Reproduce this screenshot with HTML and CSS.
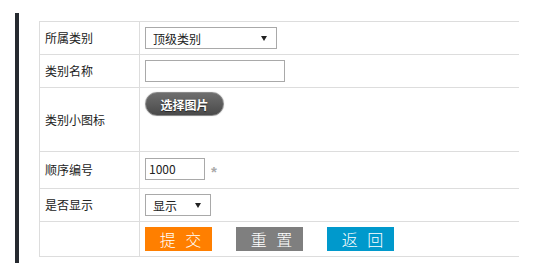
FILE: index.html
```html
<!DOCTYPE html>
<html lang="zh-CN">
  <head>
    <meta charset="UTF-8" />
    <meta name="viewport" content="width=device-width, initial-scale=1.0" />
    <title>添加类别</title>
    <link rel="stylesheet" href="styles.css">
  </head>
  <body>
    <div class="main">
      <form class="form-table">
        <div class="label">所属类别</div>
        <div class="value">
          <span class="select-wrap">
            <select class="select-parent" name="parent">
              <option>顶级类别</option>
            </select>
          </span>
        </div>

        <div class="label">类别名称</div>
        <div class="value">
          <input type="text" class="input-name" name="name" />
        </div>

        <div class="label">类别小图标</div>
        <div class="value value-top">
          <button type="button" class="btn-pic">选择图片</button>
        </div>

        <div class="label">顺序编号</div>
        <div class="value value-order">
          <input type="text" class="input-order" name="order" value="1000" />
          <span class="required">*</span>
        </div>

        <div class="label">是否显示</div>
        <div class="value">
          <span class="select-wrap">
            <select class="select-show" name="show">
              <option>显示</option>
              <option>隐藏</option>
            </select>
          </span>
        </div>

        <div class="label"></div>
        <div class="value actions">
          <button type="submit" class="btn btn-submit">提 交</button>
          <button type="reset" class="btn btn-reset">重 置</button>
          <button type="button" class="btn btn-back">返 回</button>
        </div>
      </form>
    </div>
  </body>
</html>
```

FILE: styles.css
```css
body {
  margin: 0;
  padding: 13px 0 0 15px;
  background: #fff;
  font-family: "Noto Sans CJK SC", "Liberation Sans", sans-serif;
  font-size: 12px;
  color: #333;
}

/* dark strip on the left of the content area */
.main {
  border-left: 4px solid #262a30;
  padding: 8px 0 6px 20px;
}

.form-table {
  display: grid;
  grid-template-columns: 100px 380px;
  grid-template-rows: 33px 33px 64px 37px 33px 35px;
  border-top: 1px solid #ddd;
  width: 480px;
}

.label,
.value {
  box-sizing: border-box;
  border-bottom: 1px solid #ddd;
  border-left: 1px solid #ddd;
  display: flex;
  align-items: center;
}

.label {
  padding-left: 5px;
  line-height: 14px;
  color: #222;
}

.value {
  padding-left: 5px;
}

.value-top {
  align-items: flex-start;
  padding-top: 4px;
}

.value-order {
  padding-bottom: 3px;
}

/* selects with a small black arrow */
.select-wrap {
  position: relative;
  display: inline-block;
}

.select-wrap::after {
  content: "";
  position: absolute;
  right: 10px;
  top: 9px;
  border-left: 3px solid transparent;
  border-right: 3px solid transparent;
  border-top: 5px solid #222;
  pointer-events: none;
}

select,
input[type="text"] {
  box-sizing: border-box;
  height: 22px;
  margin: 0;
  border: 1px solid #a9a9a9;
  background: #fff;
  font-family: inherit;
  font-size: 12px;
  color: #222;
  outline: none;
}

select {
  appearance: none;
  -webkit-appearance: none;
  border-radius: 0;
  padding: 0 0 0 7px;
}

.select-parent {
  width: 132px;
}

.select-show {
  width: 66px;
}

.input-name {
  width: 140px;
}

.input-order {
  width: 60px;
  padding: 0 3px;
  font-family: "Liberation Sans", sans-serif;
}

.required {
  color: #aaa;
  margin: 6px 0 0 6px;
  font-family: "Liberation Sans", sans-serif;
  font-size: 15px;
  font-weight: bold;
}

/* rounded dark button */
.btn-pic {
  width: 79px;
  height: 24px;
  padding: 0;
  border: 1px solid #8a8a8a;
  border-radius: 12px;
  background: linear-gradient(#6e6e6e, #4a4a4a);
  box-shadow: 0 0 1px #aaa;
  color: #fff;
  font-family: inherit;
  font-size: 12px;
  font-weight: bold;
  text-shadow: 0 1px 1px #222;
  cursor: pointer;
}

.actions {
  gap: 24px;
}

.btn {
  width: 67px;
  height: 24px;
  padding: 0 0 0 7px;
  border: none;
  color: #fff;
  font-family: inherit;
  font-size: 16px;
  font-weight: 300;
  letter-spacing: 3px;
  cursor: pointer;
}

.btn-submit {
  background-color: #ff7f00;
}

.btn-reset {
  background-color: #7f7f7f;
}

.btn-back {
  background-color: #0099cc;
}
```
